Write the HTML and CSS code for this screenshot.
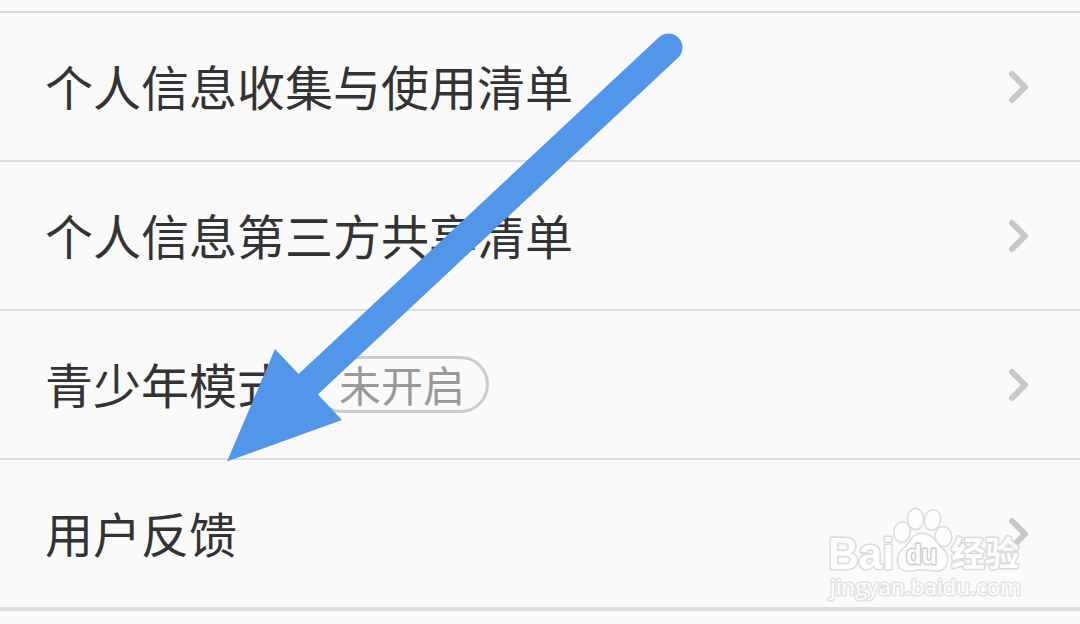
FILE: index.html
```html
<!DOCTYPE html>
<html lang="zh-CN">
<head>
  <meta charset="UTF-8">
  <meta name="viewport" content="width=device-width, initial-scale=1.0">
  <title>设置</title>
  <link rel="stylesheet" href="styles.css">
</head>
<body>
  <div class="screen">
    <ul class="list">
      <li class="row">
        <span class="label">个人信息收集与使用清单</span>
        <svg class="chevron" viewBox="0 0 22 34"><path d="M4 4 L17 17 L4 30"/></svg>
      </li>
      <li class="row">
        <span class="label">个人信息第三方共享清单</span>
        <svg class="chevron" viewBox="0 0 22 34"><path d="M4 4 L17 17 L4 30"/></svg>
      </li>
      <li class="row">
        <span class="label">青少年模式</span>
        <span class="tag">未开启</span>
        <svg class="chevron" viewBox="0 0 22 34"><path d="M4 4 L17 17 L4 30"/></svg>
      </li>
      <li class="row">
        <span class="label">用户反馈</span>
        <svg class="chevron" viewBox="0 0 22 34"><path d="M4 4 L17 17 L4 30"/></svg>
      </li>
    </ul>

    <!-- arrow pointing at the feedback row -->
    <svg class="arrow" viewBox="0 0 1080 624">
      <path class="arrow-line" d="M668.5 47.5 L301 391"/>
      <path class="arrow-head" d="M227 461.5 L275 349 L342 420 Z"/>
    </svg>

    <svg class="watermark" viewBox="0 0 210 100">
      <text class="brand" x="8" y="65" textLength="66" lengthAdjust="spacingAndGlyphs">Bai</text>
      <g class="paw">
        <ellipse cx="82" cy="28" rx="7.5" ry="9.5" transform="rotate(8 82 28)"/>
        <ellipse cx="95.500" cy="15" rx="7.300" ry="10"/>
        <ellipse cx="112.500" cy="16" rx="7.300" ry="9.600" transform="rotate(12 112.500 16)"/>
        <ellipse cx="123.500" cy="32.500" rx="7.500" ry="9.300" transform="rotate(-8 123.500 32.500)"/>
        <path d="M102 30 C112 30 115 38 121 44 C127 49 128 54 126 60 C123 70 112 65 102 65 C93 65 83 70 79 61 C76 52 81 47 86 43 C91 37 94 30 102 30 Z"/>
      </g>
      <text class="du" x="86" y="60" textLength="31" lengthAdjust="spacingAndGlyphs">du</text>
      <text class="brand-cn" x="131" y="62" textLength="68" lengthAdjust="spacingAndGlyphs">经验</text>
      <text class="url" x="10" y="91" textLength="191" lengthAdjust="spacingAndGlyphs">jingyan.baidu.com</text>
    </svg>
  </div>
</body>
</html>
```
FILE: styles.css
```css
body {
  margin: 0;
  background-color: #fafafa;
  color: #333;
  font-family: "Noto Sans CJK SC", sans-serif;
  overflow: hidden;
}
.screen {
  position: relative;
  height: 624px;
  box-sizing: border-box;
  padding-top: 11px;
}
.list {
  list-style: none;
  margin: 0;
  padding: 0;
  border-bottom: 4px solid #dcdcdc;
}
.row {
  display: flex;
  align-items: center;
  box-sizing: border-box;
  height: 149px;
  padding: 0 50px 0 45px;
  border-top: 2px solid #dcdcdc;
}
.label {
  margin-top: -4px;
  font-size: 48px;
  line-height: 72px;
}
.tag {
  box-sizing: border-box;
  height: 57px;
  margin-left: 28px;
  margin-top: -1px;
  padding: 0 21px 0 23px;
  border: 3px solid #ccc;
  border-radius: 29px;
  font-size: 42px;
  line-height: 50px;
  color: #999;
}
.chevron {
  width: 22px;
  height: 34px;
  margin-left: auto;
  fill: none;
  stroke: #c8c8c8;
  stroke-width: 6;
  stroke-linecap: round;
  stroke-linejoin: round;
}
.arrow {
  position: absolute;
  top: 0;
  left: 0;
  width: 1080px;
  height: 624px;
}
.arrow-line {
  fill: none;
  stroke: #5296ea;
  stroke-width: 28;
  stroke-linecap: round;
}
.arrow-head {
  fill: #5296ea;
}
.watermark {
  position: absolute;
  left: 820px;
  top: 504px;
  width: 210px;
  height: 100px;
  opacity: 0.85;
}
.watermark text,
.paw {
  fill: #fff;
  stroke: #d6d6d6;
  stroke-width: 3;
  stroke-linejoin: round;
  paint-order: stroke;
}
.brand {
  font: bold 44px "Liberation Sans", sans-serif;
}
.watermark .du {
  font: bold 27px "Liberation Sans", sans-serif;
  stroke: #c4c4c4;
}
.brand-cn {
  font: bold 34px "Noto Sans CJK SC", sans-serif;
}
.watermark .url {
  font: 22px "Open Sans", sans-serif;
  stroke: #dedede;
}
```
